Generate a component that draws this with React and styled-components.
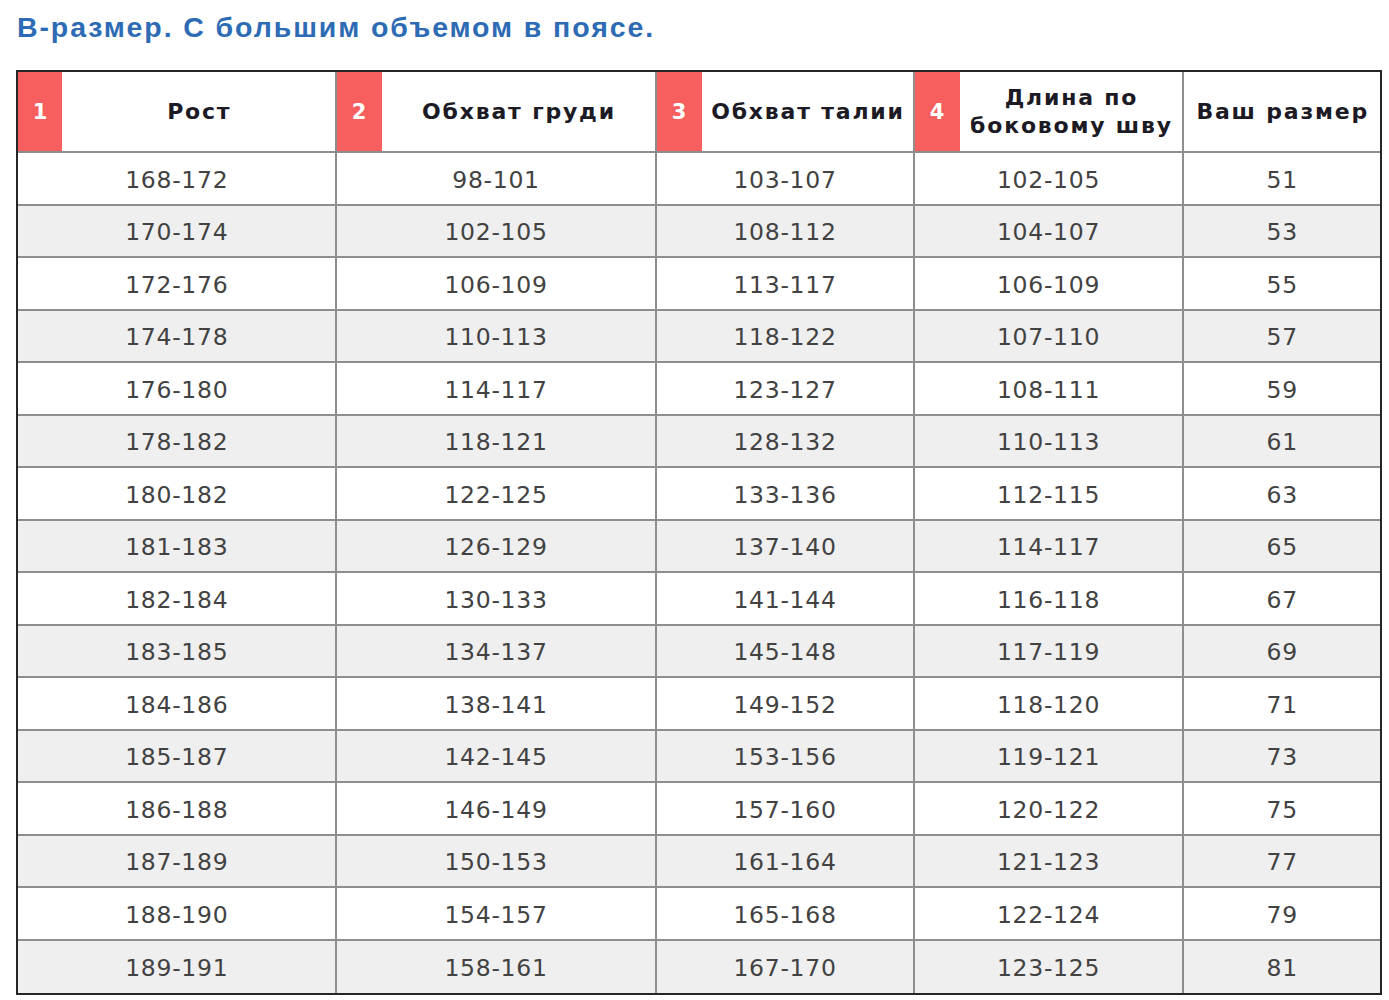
import React from 'react';
import styled, { createGlobalStyle } from 'styled-components';

const GlobalStyle = createGlobalStyle`
    html, body {
        margin: 0;
        padding: 0;
        background: #ffffff;
    }
`

const Page = styled.div`
    padding: 10px 0 0 16px;
    font-family: "DejaVu Sans", Verdana, sans-serif;
`

const Title = styled.h2`
    margin: 0 0 26px 1px;
    font-family: "Liberation Sans", Arial, sans-serif;
    font-size: 28.5px;
    line-height: 34px;
    font-weight: bold;
    letter-spacing: 1.9px;
    color: #2e6bb5;
`

const Frame = styled.div`
    width: 1362px;
    border: 2px solid #262626;
`

const Table = styled.table`
    width: 100%;
    table-layout: fixed;
    border-collapse: separate;
    border-spacing: 0;
`

const HeadRow = styled.tr`
    height: 81px;
`

const Badge = styled.th`
    padding: 0;
    background: #f75f5f;
    color: #ffffff;
    font-size: 21px;
    font-weight: bold;
    text-align: center;
    border-bottom: 2px solid #8e8e8e;
`

const HeadCell = styled.th`
    padding: 0 0 0 2px;
    background: #ffffff;
    color: #1c1a24;
    font-size: 22px;
    line-height: 28px;
    font-weight: bold;
    letter-spacing: 1.8px;
    text-align: center;
    border-bottom: 2px solid #8e8e8e;
    border-right: ${p => p.$last ? 'none' : '2px solid #8e8e8e'};
`

const Row = styled.tr`
    height: 52.5px;
    background: ${p => p.$alt ? '#efefef' : '#ffffff'};
`

const Cell = styled.td`
    padding: 3px 0 0 1px;
    color: #424242;
    font-size: 23.5px;
    letter-spacing: 0.7px;
    text-align: center;
    border-bottom: ${p => p.$bottom ? 'none' : '2px solid #8e8e8e'};
    border-right: ${p => p.$last ? 'none' : '2px solid #8e8e8e'};
`

const widths = [44, 274.5, 45, 275, 45, 213, 45, 224, 196.5]

const headers = [
    { n: 1, title: 'Рост' },
    { n: 2, title: 'Обхват груди' },
    { n: 3, title: 'Обхват талии' },
    { n: 4, title: <>Длина по<br />боковому шву</> },
]

const rows = [
    ['168-172', '98-101', '103-107', '102-105', '51'],
    ['170-174', '102-105', '108-112', '104-107', '53'],
    ['172-176', '106-109', '113-117', '106-109', '55'],
    ['174-178', '110-113', '118-122', '107-110', '57'],
    ['176-180', '114-117', '123-127', '108-111', '59'],
    ['178-182', '118-121', '128-132', '110-113', '61'],
    ['180-182', '122-125', '133-136', '112-115', '63'],
    ['181-183', '126-129', '137-140', '114-117', '65'],
    ['182-184', '130-133', '141-144', '116-118', '67'],
    ['183-185', '134-137', '145-148', '117-119', '69'],
    ['184-186', '138-141', '149-152', '118-120', '71'],
    ['185-187', '142-145', '153-156', '119-121', '73'],
    ['186-188', '146-149', '157-160', '120-122', '75'],
    ['187-189', '150-153', '161-164', '121-123', '77'],
    ['188-190', '154-157', '165-168', '122-124', '79'],
    ['189-191', '158-161', '167-170', '123-125', '81'],
]

const App = () => {
    return (
        <Page>
            <GlobalStyle />
            <Title>В-размер. С большим объемом в поясе.</Title>
            <Frame>
                <Table>
                    <colgroup>
                        {widths.map((w, i) => <col key={i} style={{ width: w + 'px' }} />)}
                    </colgroup>
                    <thead>
                        <HeadRow>
                            {headers.map(h => (
                                <React.Fragment key={h.n}>
                                    <Badge>{h.n}</Badge>
                                    <HeadCell>{h.title}</HeadCell>
                                </React.Fragment>
                            ))}
                            <HeadCell $last>Ваш размер</HeadCell>
                        </HeadRow>
                    </thead>
                    <tbody>
                        {rows.map((r, i) => (
                            <Row key={i} $alt={i % 2 === 1}>
                                {r.map((v, j) => (
                                    <Cell
                                        key={j}
                                        colSpan={j < 4 ? 2 : 1}
                                        $last={j === 4}
                                        $bottom={i === rows.length - 1}
                                    >
                                        {v}
                                    </Cell>
                                ))}
                            </Row>
                        ))}
                    </tbody>
                </Table>
            </Frame>
        </Page>
    )
}

export default App
